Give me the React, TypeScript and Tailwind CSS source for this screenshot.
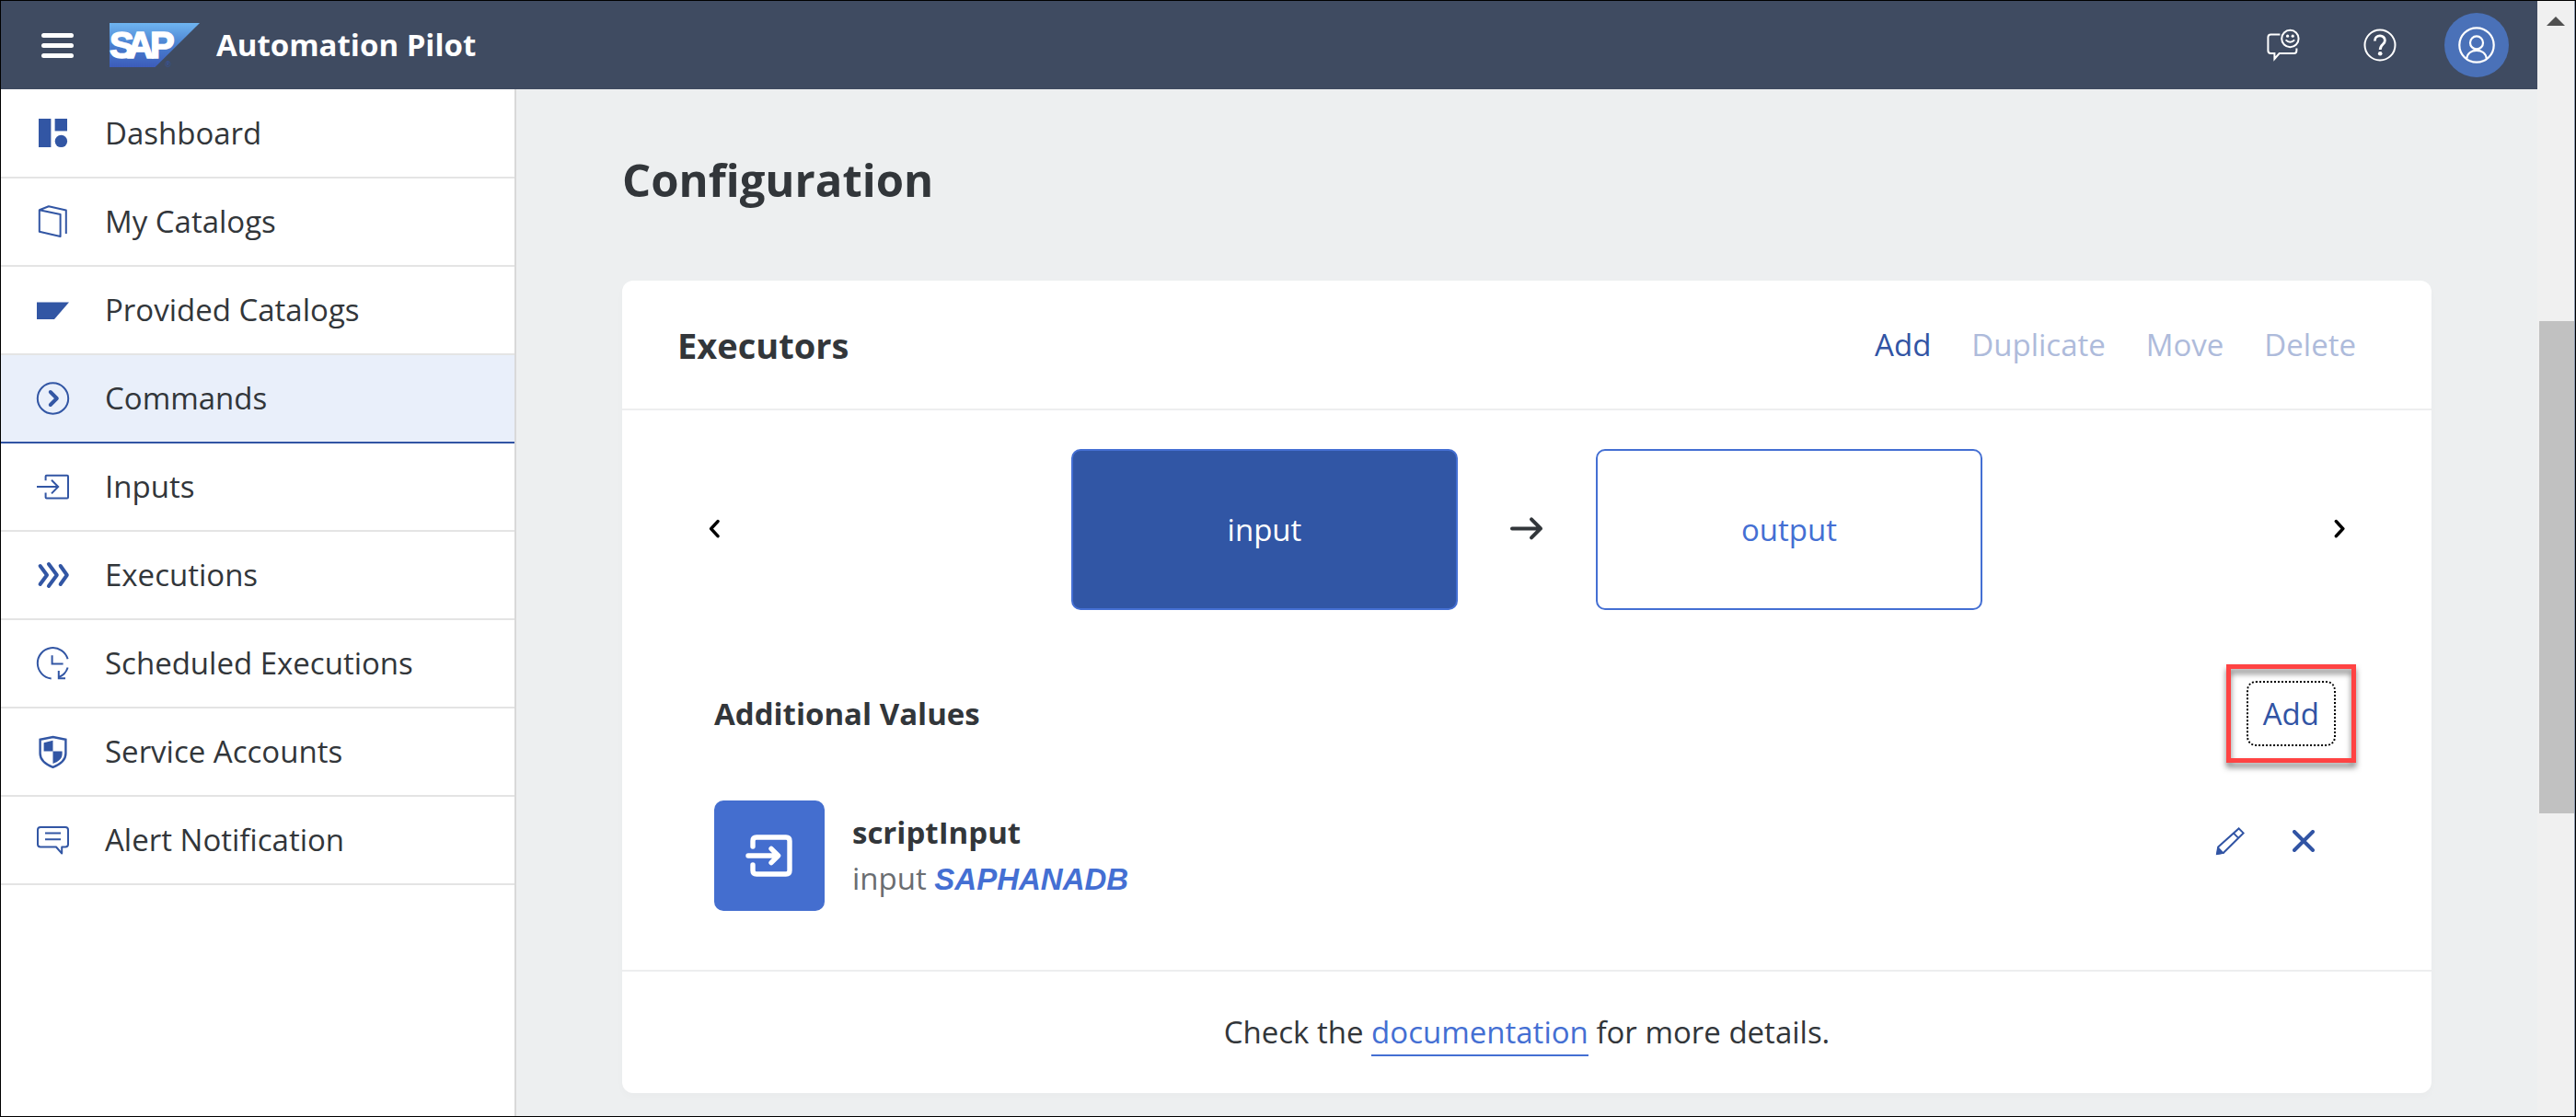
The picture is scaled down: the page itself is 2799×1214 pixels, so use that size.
import type { ReactNode } from "react";

function Icon({ children, width = 2 }: { children: ReactNode; width?: number }) {
  return (
    <svg
      viewBox="0 0 36 36"
      className="h-9 w-9 shrink-0 overflow-visible"
      fill="none"
      stroke="currentColor"
      strokeWidth={width}
      aria-hidden="true"
    >
      {children}
    </svg>
  );
}

const DashboardIcon = () => (
  <Icon>
    <g fill="currentColor" stroke="none">
      <rect x="2" y="2" width="13.4" height="31" />
      <rect x="19.6" y="2" width="13.4" height="13.4" />
      <circle cx="26.4" cy="26.4" r="6.7" />
    </g>
  </Icon>
);

const CatalogIcon = () => (
  <Icon>
    <path d="M2.8 5.3 L25.6 10 V34 L2.8 28.8 Z M2.8 5.3 L12.9 1.3 L31.8 5.4 V31" strokeLinejoin="round" />
  </Icon>
);

const ProvidedIcon = () => (
  <Icon>
    <path d="M0 9.5 H35 L19 28 H0 Z" fill="currentColor" stroke="none" />
  </Icon>
);

const CommandsIcon = () => (
  <Icon>
    <circle cx="17.5" cy="18" r="16.7" />
    <path d="M14.8 11 L21.8 18 L14.8 25" strokeWidth="4" strokeLinecap="round" strokeLinejoin="round" />
  </Icon>
);

const InputsIcon = () => (
  <Icon>
    <path d="M9.6 11.3 V6.8 Q9.6 5.8 10.6 5.8 H33 Q34 5.8 34 6.8 V29.4 Q34 30.4 33 30.4 H10.6 Q9.6 30.4 9.6 29.4 V24.6" />
    <path d="M0 18 H23 M16 10.8 L23.2 18 L16 25.4" />
  </Icon>
);

const ExecutionsIcon = () => (
  <Icon width={4}>
    <path
      d="M3.6 8 L11 18 L3.6 28 M12.9 6 L21.8 18 L12.9 30 M25.7 8 L32.8 18 L25.7 28"
      strokeLinecap="round"
      strokeLinejoin="round"
    />
  </Icon>
);

const ScheduledIcon = () => (
  <Icon>
    <path d="M33.6 13.3 A16.7 16.7 0 1 0 15.7 34.4" />
    <path d="M33.6 22.5 A16.7 16.7 0 0 1 24 33" />
    <path d="M23.8 26 V34.2 H31 M16.6 9.3 V18.4 H28.6" />
  </Icon>
);

const ShieldIcon = () => (
  <Icon width={2.4}>
    <path d="M17.5 2 L31.4 4.8 V20 C31.4 27 26 31.5 17.5 34.8 C9 31.5 3.6 27 3.6 20 V4.8 Z" />
    <path
      d="M17.5 5.8 V17.6 H7.6 V8.2 Z M17.5 17.6 H27.6 V20.5 C27.6 25.5 23.5 28.8 17.5 31 Z"
      fill="currentColor"
      stroke="none"
    />
  </Icon>
);

const AlertIcon = () => (
  <Icon>
    <path
      d="M4 4 H31 Q34 4 34 7 V22.5 Q34 25.5 31 25.5 H27.2 V32.6 L21 25.5 H4 Q1 25.5 1 22.5 V7 Q1 4 4 4 Z"
      strokeLinejoin="round"
    />
    <path d="M9 10.6 H26 M9 17.2 H26" />
  </Icon>
);

const navItems = [
  { label: "Dashboard", icon: <DashboardIcon /> },
  { label: "My Catalogs", icon: <CatalogIcon /> },
  { label: "Provided Catalogs", icon: <ProvidedIcon /> },
  { label: "Commands", icon: <CommandsIcon />, active: true },
  { label: "Inputs", icon: <InputsIcon /> },
  { label: "Executions", icon: <ExecutionsIcon /> },
  { label: "Scheduled Executions", icon: <ScheduledIcon /> },
  { label: "Service Accounts", icon: <ShieldIcon /> },
  { label: "Alert Notification", icon: <AlertIcon /> },
];

function SapLogo() {
  return (
    <svg viewBox="0 0 98 48" className="h-12 w-[98px] shrink-0 overflow-visible" role="img" aria-label="SAP">
      <defs>
        <linearGradient id="logo" x1="0" y1="0" x2="0" y2="1">
          <stop offset="0" stopColor="#6fb5f0" />
          <stop offset="0.5" stopColor="#4a80d0" />
          <stop offset="1" stopColor="#3c5cba" />
        </linearGradient>
      </defs>
      <path d="M0 0 H98 L49.5 48 H0 Z" fill="url(#logo)" />
      <text
        x="0 19 44"
        y="38"
        fontFamily="Liberation Sans, sans-serif"
        fontWeight="700"
        fontSize="40"
        fill="#fff"
        stroke="#fff"
        strokeWidth="1.6"
      >
        SAP
      </text>
      <text x="60.5" y="48" fontFamily="Liberation Sans, sans-serif" fontSize="8.5" fill="#3556a8">
        ®
      </text>
    </svg>
  );
}

function Header() {
  return (
    <header className="flex h-24 items-center bg-[#3f4b61] pr-[31px] pl-11 text-white">
      <button type="button" aria-label="Menu" className="flex w-[35px] flex-col gap-1.5">
        <span className="h-[5px] rounded-full bg-white" />
        <span className="h-[5px] rounded-full bg-white" />
        <span className="h-[5px] rounded-full bg-white" />
      </button>
      <div className="ml-[39px] flex items-center gap-[18px]">
        <SapLogo />
        <span className="font-bold whitespace-nowrap">Automation Pilot</span>
      </div>
      <div className="ml-auto flex items-center gap-[35px]">
        <button type="button" aria-label="Feedback" className="flex size-[70px] items-center justify-center">
          <svg viewBox="0 0 36 36" className="size-9 overflow-visible" fill="none" stroke="#fff" strokeWidth="2">
            <path d="M14.4 6.4 H4.4 Q1.4 6.4 1.4 9.4 V24 Q1.4 27 4.4 27 H8.4 V33 L13.6 27 H29.6 Q32.4 27 32.4 24 V21.4" />
            <circle cx="25.4" cy="11" r="9.2" />
            <circle cx="22.6" cy="8.2" r="1.6" fill="#fff" stroke="none" />
            <circle cx="28.2" cy="8.2" r="1.6" fill="#fff" stroke="none" />
            <path d="M20.6 12.4 Q25.4 17.2 30.2 12.4" />
          </svg>
        </button>
        <button type="button" aria-label="Help" className="flex size-[70px] items-center justify-center">
          <svg viewBox="0 0 36 36" className="size-9 overflow-visible" fill="none" stroke="#fff" strokeWidth="2">
            <circle cx="18" cy="18" r="16.5" />
            <path d="M12.4 13.4 C12.4 6.2 23.4 6.2 23.4 13 C23.4 17.6 18.2 17 18.2 23" strokeWidth="2.8" />
            <circle cx="18.2" cy="27.2" r="2.3" fill="#fff" stroke="none" />
          </svg>
        </button>
        <button
          type="button"
          aria-label="Profile"
          className="flex size-[70px] items-center justify-center rounded-full bg-[#4a71b8]"
        >
          <svg viewBox="0 0 40 40" className="size-10" fill="none" stroke="#fff" strokeWidth="2.2">
            <circle cx="20" cy="20" r="18.7" />
            <circle cx="20" cy="17.4" r="7" />
            <path d="M9.2 35 C9.8 28.6 14.6 25.8 20 25.8 C25.4 25.8 30.2 28.6 30.8 35" />
          </svg>
        </button>
      </div>
    </header>
  );
}

function Sidebar() {
  return (
    <nav className="w-[560px] shrink-0 border-r-2 border-[#d9d9d9] bg-white pt-px">
      <ul>
        {navItems.map((item) => (
          <li key={item.label}>
            <a
              href="#"
              aria-current={item.active ? "page" : undefined}
              className={
                item.active
                  ? "flex h-24 items-center gap-[38px] border-b-2 border-[#3154a4] bg-[#e9effa] pl-[39px]"
                  : "flex h-24 items-center gap-[38px] border-b-2 border-[#e4e4e4] pl-[39px]"
              }
            >
              <span className="text-[#3256a4]">{item.icon}</span>
              <span>{item.label}</span>
            </a>
          </li>
        ))}
      </ul>
    </nav>
  );
}

function Executors() {
  return (
    <section className="rounded-xl bg-white shadow-[0_4px_8px_rgba(0,0,0,0.02)]">
      <div className="flex h-[141px] items-center justify-between border-b-2 border-[#edeeef] px-[60px]">
        <h2 className="text-[38px] font-bold">Executors</h2>
        <div className="flex text-[#3154a4]">
          <button type="button" className="px-[22px]">Add</button>
          <button type="button" disabled className="px-[22px] text-[#aebbdb]">Duplicate</button>
          <button type="button" disabled className="px-[22px] text-[#aebbdb]">Move</button>
          <button type="button" disabled className="px-[22px] text-[#aebbdb]">Delete</button>
        </div>
      </div>

      <div className="flex items-center justify-between px-[88px] pt-[42px]">
        <button type="button" aria-label="Previous" className="flex w-6 justify-center">
          <svg viewBox="0 0 24 24" className="size-6" fill="none" stroke="#000" strokeWidth="3.6">
            <path d="M16 2.6 L8.6 10.6 L16 18.6" strokeLinecap="round" strokeLinejoin="round" />
          </svg>
        </button>
        <div className="flex items-center">
          <button
            type="button"
            className="h-[175px] w-[420px] rounded-[10px] border-2 border-[#446fd3] bg-[#3156a5] text-white"
          >
            input
          </button>
          <span className="flex w-[150px] justify-center">
            <svg viewBox="0 0 40 40" className="size-10" fill="none" stroke="#32363a" strokeWidth="4">
              <path d="M4 18.4 H35 M25 8.4 L35 18.4 L25 28.4" strokeLinecap="round" strokeLinejoin="round" />
            </svg>
          </span>
          <button
            type="button"
            className="h-[175px] w-[420px] rounded-[10px] border-2 border-[#446fd3] bg-white text-[#446fd3]"
          >
            output
          </button>
        </div>
        <button type="button" aria-label="Next" className="flex w-6 justify-center">
          <svg viewBox="0 0 24 24" className="size-6" fill="none" stroke="#000" strokeWidth="3.6">
            <path d="M8.4 2.6 L15.8 10.6 L8.4 18.6" strokeLinecap="round" strokeLinejoin="round" />
          </svg>
        </button>
      </div>

      <div className="pt-[77px] pr-[104px] pb-16 pl-[100px]">
        <div className="flex items-center justify-between">
          <h3 className="font-bold">Additional Values</h3>
          <div className="relative">
            <button
              type="button"
              className="h-[71px] rounded-[10px] border-2 border-dotted border-black px-4 text-[#3154a4]"
            >
              Add
            </button>
            <span className="pointer-events-none absolute -inset-x-[22px] -inset-y-[18px] border-[5px] border-[#ff4343] drop-shadow-[0_5px_3px_rgba(0,0,0,0.5)]" />
          </div>
        </div>

        <div className="mt-[59px] flex items-center">
          <span className="flex size-[120px] items-center justify-center rounded-[10px] bg-[#446ecf]">
            <svg viewBox="0 0 52 46" className="h-[46px] w-[52px]" fill="none" stroke="#fff" strokeWidth="5.4" strokeLinecap="round">
              <path d="M8 13 V7 Q8 3 12 3 H44 Q48 3 48 7 V39 Q48 43 44 43 H12 Q8 43 8 39 V33" />
              <path d="M3 23 H35 M28 15.4 L35.6 23 L28 30.6" strokeLinejoin="round" />
            </svg>
          </span>
          <div className="ml-[30px] leading-[50px]">
            <p className="font-bold">scriptInput</p>
            <p className="text-[#6a6d70]">
              input <em className="font-['Liberation_Sans',sans-serif] font-bold text-[#446fd3]">SAPHANADB</em>
            </p>
          </div>
          <div className="ml-auto flex gap-[10px] self-start text-[#3154a4]">
            <button type="button" aria-label="Edit" className="flex h-[88px] w-[70px] items-center justify-center">
              <svg viewBox="0 0 32 32" className="size-8" fill="none" stroke="currentColor" strokeWidth="2">
                <path d="M2 30 L3.2 22.6 L25.6 2.4 L30.6 7.4 L9 28.8 Z M20 7.6 L25 12.6" />
                <path d="M1 31 L3 22 L10 29.4 Z" fill="currentColor" stroke="none" />
              </svg>
            </button>
            <button type="button" aria-label="Remove" className="flex h-[88px] w-[70px] items-center justify-center">
              <svg viewBox="0 0 24 24" className="size-6" fill="none" stroke="currentColor" strokeWidth="4">
                <path d="M2 2 L22 22 M22 2 L2 22" strokeLinecap="round" />
              </svg>
            </button>
          </div>
        </div>
      </div>

      <p className="border-t-2 border-[#edeeef] py-11 text-center">
        Check the{" "}
        <a href="#" className="border-b-2 border-[#446fd3] pb-0.5 text-[#446fd3]">
          documentation
        </a>{" "}
        for more details.
      </p>
    </section>
  );
}

function Scrollbar() {
  return (
    <div className="flex w-[41px] shrink-0 flex-col border-r border-[#8a97ac] bg-[#f0f0f0]" aria-hidden="true">
      <svg viewBox="0 0 20 10" className="mt-[17px] h-2.5 w-5 self-center">
        <path d="M0 10 L10 0 L20 10 Z" fill="#505050" />
      </svg>
      <div className="mt-[321px] ml-0.5 h-[535px] bg-[#c1c1c1]" />
    </div>
  );
}

export default function App() {
  return (
    <div className="flex min-h-screen border border-black bg-[#edeff0] font-['Open_Sans',sans-serif] text-[33px] leading-[44px] text-[#32363a]">
      <div className="flex min-w-0 flex-1 flex-col">
        <Header />
        <div className="flex flex-1">
          <Sidebar />
          <main className="min-w-0 flex-1 px-[115px] pt-[66px] pb-6">
            <h1 className="mb-[78px] text-[49px] leading-16 font-bold">Configuration</h1>
            <Executors />
          </main>
        </div>
      </div>
      <Scrollbar />
    </div>
  );
}
